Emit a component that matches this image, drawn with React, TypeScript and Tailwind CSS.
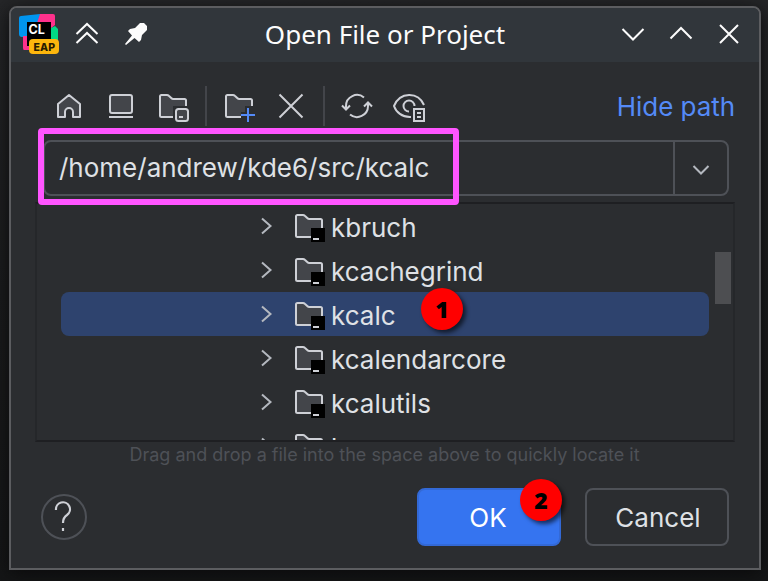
import React from "react";

const STROKE = "#ced0d6";
const FILL = "#43454a";

function Icon({ children, className = "" }: { children: React.ReactNode; className?: string }) {
  return (
    <svg viewBox="0 0 32 32" className={`h-8 w-8 shrink-0 ${className}`} fill="none" stroke={STROKE} strokeWidth="2">
      {children}
    </svg>
  );
}

const FOLDER = "M3 6.500Q3 5 4.500 5H10Q11 5 11.800 5.800L14.500 8.300Q15.200 9 16.200 9H27.500Q29 9 29 10.500V25.500Q29 27 27.500 27H4.500Q3 27 3 25.500Z";

function Separator() {
  return <div className="-mx-1 h-10 w-0.5 bg-[#43454a]" />;
}

function ClionLogo() {
  return (
    <svg viewBox="0 0 42 42" className="h-[42px] w-[42px]">
      <path d="M1 5Q1 3 3 3L22 1L21 20L8 24H4Q1 24 1 21Z" fill="#0095ef" />
      <path d="M22 1H35Q37 1 37 3V12L32 16H17Z" fill="#ff318c" />
      <path d="M37 13L40 16V27H33V15Z" fill="#00d886" />
      <path d="M5 23H11V37H6Q5 37 5 35Z" fill="#ff318c" />
      <path d="M9 9H33V33H9Z" fill="#000" />
      <rect x="11" y="26" width="30" height="15" rx="4" fill="#fdb60d" />
      <text x="10.500" y="21" fontFamily="Inter, sans-serif" fontWeight="700" fontSize="12.500" fill="#fff">CL</text>
      <text x="15.500" y="37.500" fontFamily="Inter, sans-serif" fontWeight="800" fontSize="10.500" fill="#291b00" textLength="21.500">EAP</text>
    </svg>
  );
}

function TitleBar() {
  return (
    <header className="relative flex h-[54px] shrink-0 items-center bg-[#31363b] pb-0.5 pl-[7px] pr-[18px]">
      <ClionLogo />
      <svg viewBox="0 0 24 24" className="ml-[15px] h-6 w-6" fill="none" stroke="#fcfcfc" strokeWidth="2">
        <path d="M1.500 12L12 2L22.500 12M1.500 21L12 11L22.500 21" />
      </svg>
      <svg viewBox="0 0 24 24" className="ml-[25px] h-6 w-6" fill="#fcfcfc">
        <path d="M16 1H20L23 4V8L18 13L17 18L15 20L10.500 16L2 23L1 22L8 13.500L4 9L6 7L11 6Z" />
      </svg>
      <h1 className="absolute left-0 right-0 top-0 text-center font-['Noto_Sans'] text-[26px] leading-[53px] text-[#fcfcfc]">
        Open File or Project
      </h1>
      <svg viewBox="0 0 120 24" className="ml-auto h-6 w-[120px]" fill="none" stroke="#fcfcfc" strokeWidth="2">
        <path d="M1.500 7L12 17.500L22.500 7M49.500 16.500L60 6L70.500 16.500M99 3L117 21M117 3L99 21" />
      </svg>
    </header>
  );
}

function Toolbar() {
  return (
    <div className="flex h-10 items-center gap-5 pl-[42px] pr-[25px]">
      <Icon><path fill={FILL} strokeLinejoin="round" d="M5 14L16 5L27 14V27H20V22A4 4 0 0 0 12 22V27H5Z" /></Icon>
      <Icon><rect x="5" y="5" width="22" height="18" rx="2" fill={FILL} /><path d="M4 27H28" /></Icon>
      <Icon>
        <path d={FOLDER} fill={FILL} />
        <rect x="16" y="16" width="17" height="17" fill="#2b2d30" stroke="none" />
        <rect x="19" y="19" width="12" height="12" rx="2.500" fill={FILL} />
        <path d="M22 27H26" />
      </Icon>
      <Separator />
      <Icon>
        <path d={FOLDER} fill={FILL} />
        <path d="M18 22H22V16H33V33H18Z" fill="#2b2d30" stroke="none" />
        <path d="M25 18V32M18 25H32" stroke="#548af7" />
      </Icon>
      <Icon><path d="M4.500 4.500L27.500 27.500M27.500 4.500L4.500 27.500" /></Icon>
      <Separator />
      <Icon>
        <path d="M5 19V16A11 11 0 0 1 23 7.500M27 13V16A11 11 0 0 1 9 24.500M1 15.500L5 19.500L9 15.500M23 16.500L27 12.500L31 16.500" />
      </Icon>
      <Icon>
        <path d="M18 27C9 27.500 3 22 1 16C7 1.500 25 1.500 31 15" />
        <path d="M16 21.500A5.500 5.500 0 1 1 21.500 16" />
        <rect x="21" y="19" width="10" height="12" />
        <path d="M24 23H28M24 27H28" />
      </Icon>
      <span className="ml-auto translate-x-px translate-y-px whitespace-nowrap text-[26px] leading-10 tracking-[-0.05px] text-[#548af7]">Hide path</span>
    </div>
  );
}

function PathField() {
  return (
    <div className="relative z-10 mt-3.5 pl-8 pr-[30px]">
      <div className="flex h-14 rounded-lg border-2 border-[#4e5157]">
        <div className="flex-1 pl-[14px] text-[26px] leading-[51px] text-[#dfe1e5]">/home/andrew/kde6/src/kcalc</div>
        <div className="flex w-[54px] items-center justify-center border-l-2 border-[#4e5157]">
          <svg viewBox="0 0 18 12" className="mt-1 h-3 w-[18px]" fill="none" stroke="#b4b8bf" strokeWidth="2"><path d="M1.500 2L9 9.500L16.500 2" /></svg>
        </div>
      </div>
      <div className="absolute -top-3 left-[27px] h-[77px] w-[421px] rounded-sm border-[6px] border-[#ff55ff]" />
    </div>
  );
}

function Badge({ n, className }: { n: number; className: string }) {
  return (
    <div className={`absolute h-[42px] w-[42px] rounded-full bg-[#ff0000] text-center font-['Open_Sans','Noto_Sans'] text-[23px] font-extrabold leading-[42px] text-black shadow-[3px_3px_4px_rgba(0,0,0,0.6)] ${className}`}>{n}</div>
  );
}

function TreeRow({ name, selected }: { name: string; selected?: boolean }) {
  return (
    <div className={`relative ml-6 mr-[24px] flex h-11 items-center rounded-lg pl-[197px] ${selected ? "bg-[#2e436e]" : ""}`}>
      <svg viewBox="0 0 14 18" className="ml-[2px] h-[18px] w-[14px]" fill="none" stroke="#b4b8bf" strokeWidth="2"><path d="M2 1.500L10.500 9L2 16.500" /></svg>
      <Icon className="ml-[19px]">
        <path d={FOLDER} fill={FILL} />
        <rect x="18" y="18" width="14" height="14" fill="#000" stroke="none" />
        <path d="M20 29H26" />
      </Icon>
      <span className="ml-[6px] translate-y-0.5 text-[26px] leading-[44px] text-[#dfe1e5]">{name}</span>
      {selected && <Badge n={1} className="left-[360px] top-[-4px]" />}
    </div>
  );
}

function FileTree() {
  return (
    <div className="relative ml-6 mr-[24px] mt-1.5 h-[240px] overflow-hidden border-2 border-x-[#25272a] border-y-[#1e1f22]">
      <TreeRow name="kbruch" />
      <TreeRow name="kcachegrind" />
      <TreeRow name="kcalc" selected />
      <TreeRow name="kcalendarcore" />
      <TreeRow name="kcalutils" />
      <TreeRow name="k" />
      <div className="absolute right-0.5 top-12 h-[52px] w-4 bg-[#4d4e51]" />
    </div>
  );
}

export default function App() {
  return (
    <main className="h-[581px] w-[768px] bg-gradient-to-b from-[#252628] via-[#1b1c1d] to-[#151617] pl-[9px] pt-1.5 font-[Inter,sans-serif]">
      <section className="flex h-[564px] w-[752px] flex-col overflow-hidden rounded-t-lg border-2 border-[#5c5d60] bg-[#2b2d30] shadow-[0_4px_18px_#0a0a0b]">
        <TitleBar />
        <div className="pt-6">
          <Toolbar />
          <PathField />
          <FileTree />
          <p className="-ml-px text-center text-[18px] leading-[26px] text-[#4e5157]">Drag and drop a file into the space above to quickly locate it</p>
        </div>
        <footer className="mt-5 flex items-center gap-6 pl-[30px] pr-[30px]">
          <div className="flex h-[46px] w-[46px] items-center justify-center rounded-full border-2 border-[#4e5157]">
            <svg viewBox="0 0 20 32" className="mr-0.5 h-8 w-5" fill="none" stroke={STROKE} strokeWidth="2.200"><path d="M3 9A7 7 0 1 1 14 14C11 16 10 18 10 22M10 27V30" /></svg>
          </div>
          <button className="relative ml-auto h-[58px] w-36 rounded-lg border-2 border-[#3369d6] bg-[#3574f0] pr-0.5 text-[26px] text-white">
            OK
            <Badge n={2} className="left-[101px] top-[-11px]" />
          </button>
          <button className="h-[58px] w-36 rounded-lg border-2 border-[#4e5157] pl-0.5 text-[26px] text-[#dfe1e5]">Cancel</button>
        </footer>
      </section>
    </main>
  );
}
